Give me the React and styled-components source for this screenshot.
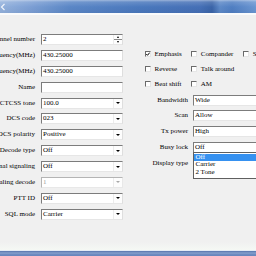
import React from "react";
import styled, { createGlobalStyle } from "styled-components";

const Global = createGlobalStyle`
  html, body {
    margin: 0;
    padding: 0;
    width: 256px;
    height: 256px;
    overflow: hidden;
    background: #f0f0f0;
  }
  body {
    font-family: "Liberation Serif", "Times New Roman", serif;
    color: #000;
  }
`;

const Window = styled.div`
  width: 256px;
  height: 256px;
  display: flex;
  flex-direction: column;
  overflow: hidden;
`;

const TitleBar = styled.div`
  height: 13px;
  flex-shrink: 0;
  position: relative;
  background:
    linear-gradient(to bottom, rgba(255,255,255,0.45) 0px, rgba(255,255,255,0.15) 2px, rgba(255,255,255,0) 7px, rgba(0,0,0,0.04) 13px),
    linear-gradient(to right, #93b1dc 0px, #7c9fd4 30px, #5a86c6 70px, #4a78bd 140px, #456fb6 200px, #3a64a8 212px, #5d89c8 220px, #4f7ec2 232px, #6b96d2 256px);
`;

const TitleIcon = styled.svg`
  position: absolute;
  left: 0;
  top: 3px;
`;

const Client = styled.div`
  flex: 1;
  border-top: 2px solid #fafbfc;
  padding-top: 16.5px;
  background: linear-gradient(to bottom, #f0f0f0 0, #f0f0f0 calc(100% - 8px), #f5f8f4 100%);
  box-sizing: border-box;
`;

const BottomFrame = styled.div`
  height: 6px;
  flex-shrink: 0;
  background: linear-gradient(to bottom, #e4ecf5 0px, #e4ecf5 0.5px, #5a78b0 1px, #6683b8 2px, #8aa4cf 3px, #6f8dc2 4px, #6585bd 6px);
`;

const Form = styled.div`
  display: flex;
  align-items: flex-start;
`;

const LeftPanel = styled.div`
  flex-shrink: 0;
  margin-left: -25px;
  display: flex;
  flex-direction: column;
`;

const RightPanel = styled.div`
  flex-shrink: 0;
  margin-left: 22.5px;
  display: flex;
  flex-direction: column;
  width: 200px;
`;

const Row = styled.div`
  height: 15.9px;
  display: flex;
  align-items: center;
  font-size: 7px;
`;

const Label = styled.div`
  width: ${(p) => p.$w}px;
  flex-shrink: 0;
  text-align: right;
  white-space: nowrap;
  margin-right: ${(p) => p.$gap}px;
  font-size: 7px;
  line-height: 9px;
`;

const Field = styled.div`
  position: relative;
  width: ${(p) => p.$w}px;
  height: 11px;
  box-sizing: border-box;
  flex-shrink: 0;
  border-style: solid;
  border-width: 1px;
  border-color: ${(p) =>
    p.$disabled ? "#b4b4b4 #e8e8e8 #e8e8e8 #b4b4b4" : "#7c7c7c #dedede #e6e6e6 #7c7c7c"};
  background: #fff;
  display: flex;
  align-items: stretch;
`;

const Value = styled.span`
  flex: 1;
  padding-left: 1.5px;
  font-size: 7px;
  line-height: 9px;
  white-space: nowrap;
  overflow: hidden;
  color: ${(p) => (p.$disabled ? "#9d9d9d" : "#000")};
`;

const ArrowButton = styled.span`
  width: 8px;
  flex-shrink: 0;
  display: flex;
  align-items: center;
  justify-content: center;
  background: #fdfdfd;
  border-left: 1px solid #ececec;
`;

const DownTriangle = styled.span`
  width: 0;
  height: 0;
  border-left: 2px solid transparent;
  border-right: 2px solid transparent;
  border-top: 2.5px solid ${(p) => (p.$disabled ? "#a8a8a8" : "#000")};
`;

const SpinButtons = styled.span`
  width: 8px;
  flex-shrink: 0;
  display: flex;
  flex-direction: column;
  border-left: 1px solid #ececec;
  background: #fdfdfd;
`;

const SpinHalf = styled.span`
  flex: 1;
  display: flex;
  align-items: center;
  justify-content: center;
  border-bottom: ${(p) => (p.$top ? "1px solid #8a8a8a" : "none")};
`;

const UpTriangle = styled.span`
  width: 0;
  height: 0;
  border-left: 1.5px solid transparent;
  border-right: 1.5px solid transparent;
  border-bottom: 2px solid #000;
`;

const SmallDown = styled.span`
  width: 0;
  height: 0;
  border-left: 1.5px solid transparent;
  border-right: 1.5px solid transparent;
  border-top: 2px solid #000;
`;

const CheckGrid = styled.div`
  display: grid;
  grid-template-columns: 46.3px 52px auto;
  align-items: center;
  height: 15.9px;
  margin-top: -1px;
  font-size: 7px;
`;

const CheckItem = styled.div`
  display: flex;
  align-items: center;
  white-space: nowrap;
`;

const Box = styled.span`
  width: 6px;
  height: 6px;
  box-sizing: border-box;
  border-style: solid;
  border-width: 1px;
  border-color: #6a6a6a #e6e6e6 #e6e6e6 #6a6a6a;
  background: #fff;
  flex-shrink: 0;
  display: flex;
  align-items: center;
  justify-content: center;
  margin-right: 3.5px;
`;

const CheckText = styled.span`
  font-size: 7px;
  line-height: 9px;
`;

const DropList = styled.div`
  position: absolute;
  left: -1px;
  top: 100%;
  width: 80px;
  box-sizing: border-box;
  border: 1px solid #5f5f5f;
  background: #fff;
  padding-top: 0.5px;
  padding-bottom: 1.5px;
  z-index: 2;
`;

const ListItem = styled.div`
  height: 7.5px;
  line-height: 7.5px;
  padding-left: 2px;
  font-size: 7px;
  white-space: nowrap;
  background: ${(p) => (p.$active ? "#3691f0" : "transparent")};
  color: ${(p) => (p.$active ? "#fff" : "#000")};
`;

const leftRows = [
  { label: "Channel number", type: "spin", value: "2" },
  { label: "Rx frequency(MHz)", type: "text", value: "430.25000" },
  { label: "Tx frequency(MHz)", type: "text", value: "430.25000" },
  { label: "Name", type: "text", value: "" },
  { label: "CTCSS tone", type: "combo", value: "100.0" },
  { label: "DCS code", type: "combo", value: "023" },
  { label: "DCS polarity", type: "combo", value: "Positive" },
  { label: "Decode type", type: "combo", value: "Off" },
  { label: "Optional signaling", type: "combo", value: "Off" },
  { label: "Signaling decode", type: "combo", value: "1", disabled: true },
  { label: "PTT ID", type: "combo", value: "Off" },
  { label: "SQL mode", type: "combo", value: "Carrier" },
];

const checkRows = [
  [
    { text: "Emphasis", checked: true },
    { text: "Compander" },
    { text: "Scrambler" },
  ],
  [{ text: "Reverse" }, { text: "Talk around" }],
  [{ text: "Beat shift" }, { text: "AM" }],
];

const rightCombos = [
  { label: "Bandwidth", value: "Wide" },
  { label: "Scan", value: "Allow" },
  { label: "Tx power", value: "High" },
  { label: "Busy lock", value: "Off", open: ["Off", "Carrier", "2 Tone"] },
  { label: "Display type", value: "" },
];

function Control({ type, value, disabled, width, children }) {
  return (
    <Field $w={width} $disabled={disabled}>
      <Value $disabled={disabled}>{value}</Value>
      {type === "combo" && (
        <ArrowButton>
          <DownTriangle $disabled={disabled} />
        </ArrowButton>
      )}
      {type === "spin" && (
        <SpinButtons>
          <SpinHalf $top>
            <UpTriangle />
          </SpinHalf>
          <SpinHalf>
            <SmallDown />
          </SpinHalf>
        </SpinButtons>
      )}
      {children}
    </Field>
  );
}

function Check({ text, checked }) {
  return (
    <CheckItem>
      <Box>
        {checked && (
          <svg width="4" height="4" viewBox="0 0 4 4">
            <path d="M0.3 2 L1.5 3.3 L3.7 0.6" stroke="#000" strokeWidth="1" fill="none" />
          </svg>
        )}
      </Box>
      <CheckText>{text}</CheckText>
    </CheckItem>
  );
}

export default function App() {
  return (
    <>
      <Global />
      <Window>
        <TitleBar>
          <TitleIcon width="6" height="8" viewBox="0 0 6 8">
            <path d="M4.5 1 L1.5 4 L4.5 7" stroke="rgba(255,255,255,0.85)" strokeWidth="1.2" fill="none" />
          </TitleIcon>
        </TitleBar>
        <Client>
          <Form>
            <LeftPanel>
              {leftRows.map((r) => (
                <Row key={r.label}>
                  <Label $w={60} $gap={5.5}>
                    {r.label}
                  </Label>
                  <Control type={r.type} value={r.value} disabled={r.disabled} width={82} />
                </Row>
              ))}
            </LeftPanel>
            <RightPanel>
              <Row />
              {checkRows.map((items, i) => (
                <CheckGrid key={i}>
                  {items.map((it) => (
                    <Check key={it.text} text={it.text} checked={it.checked} />
                  ))}
                </CheckGrid>
              ))}
              {rightCombos.map((r) => (
                <Row key={r.label}>
                  <Label $w={43} $gap={4.5}>
                    {r.label}
                  </Label>
                  <Control type="combo" value={r.value} width={80}>
                    {r.open && (
                      <DropList>
                        {r.open.map((o, idx) => (
                          <ListItem key={o} $active={idx === 0}>
                            {o}
                          </ListItem>
                        ))}
                      </DropList>
                    )}
                  </Control>
                </Row>
              ))}
            </RightPanel>
          </Form>
        </Client>
        <BottomFrame />
      </Window>
    </>
  );
}
